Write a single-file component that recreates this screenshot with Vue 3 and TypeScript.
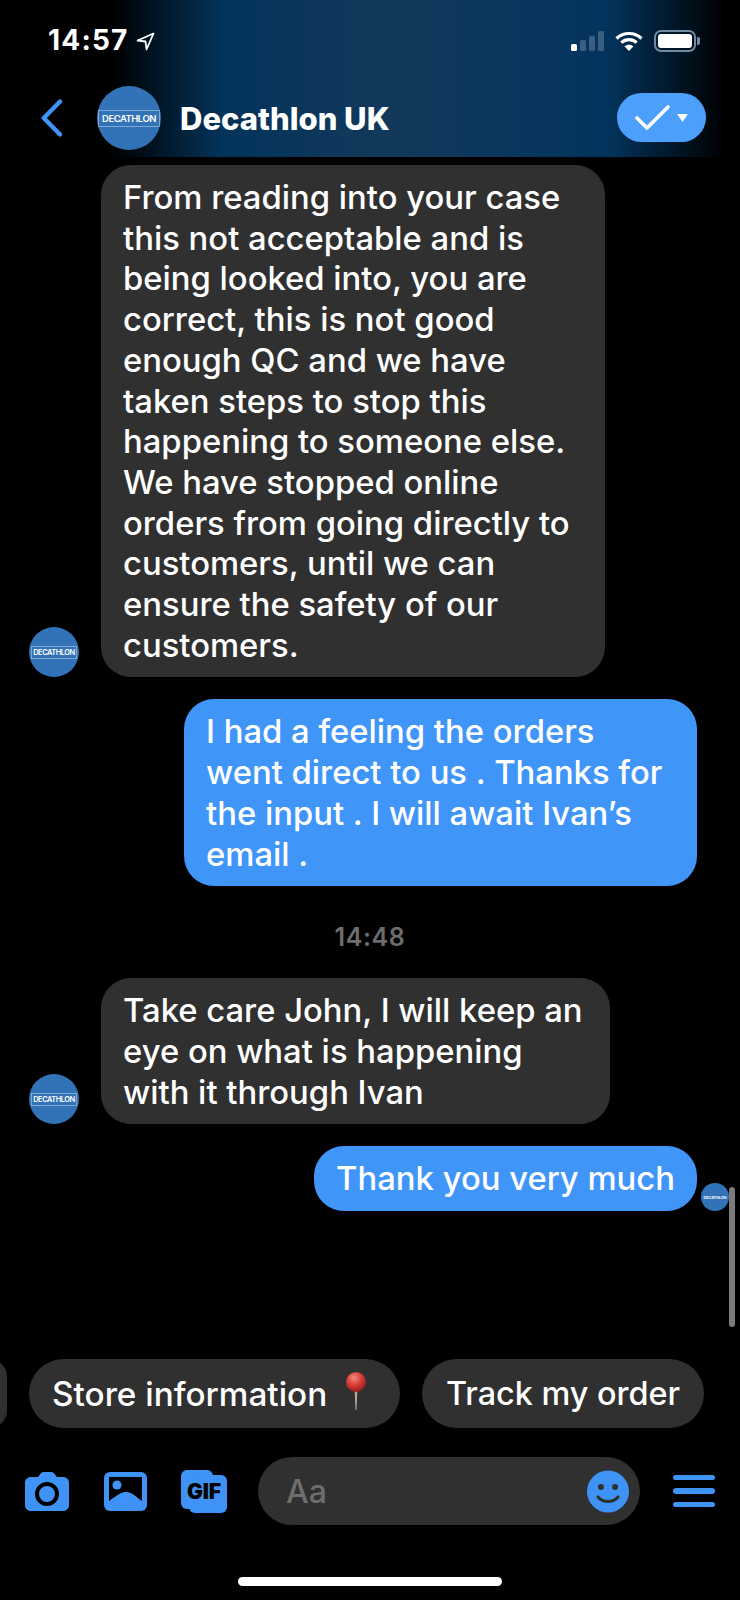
<script setup lang="ts">
interface Message {
  id: number;
  mine: boolean;
  text: string;
  width: number;
}

const first: Message[] = [
  {
    id: 1,
    mine: false,
    width: 504,
    text: 'From reading into your case this not acceptable and is being looked into, you are correct, this is not good enough QC and we have taken steps to stop this happening to someone else. We have stopped online orders from going directly to customers, until we can ensure the safety of our customers.',
  },
  {
    id: 2,
    mine: true,
    width: 513,
    text: 'I had a feeling the orders went direct to us . Thanks for the input . I will await Ivan’s email .',
  },
];

const second: Message[] = [
  {
    id: 3,
    mine: false,
    width: 509,
    text: 'Take care John, I will keep an eye on what is happening with it through Ivan',
  },
];
</script>

<template>
  <div class="phone">
    <header class="top">
      <div class="status">
        <span class="clock">14:57</span>
        <svg class="arrow" width="19" height="19" viewBox="0 0 19 19">
          <path d="M17.5 1.5 1.5 8.5l8 1 1 8z" fill="none" stroke="#fff" stroke-width="1.8" stroke-linejoin="round" />
        </svg>
        <div class="status-right">
          <svg width="33" height="20" viewBox="0 0 33 20">
            <rect x="0" y="13" width="6" height="7" rx="1.5" fill="#fff" />
            <rect x="9" y="9" width="6" height="11" rx="1.5" fill="#3a5f80" />
            <rect x="18" y="5" width="6" height="15" rx="1.5" fill="#3a5f80" />
            <rect x="27" y="0" width="6" height="20" rx="1.5" fill="#3a5f80" />
          </svg>
          <svg class="wifi" width="28" height="20" viewBox="0 0 28 20">
            <path d="M1.5 7.5C8.5 .8 19.5 .8 26.5 7.5" fill="none" stroke="#fff" stroke-width="3.2" />
            <path d="M6.3 11.6c4.400-4 11-4 15.400 0" fill="none" stroke="#fff" stroke-width="3.2" />
            <path d="M14 20l-4.600-4.700c2.600-2.200 6.600-2.200 9.200 0z" fill="#fff" />
          </svg>
          <div class="battery"><i></i></div>
        </div>
      </div>
      <div class="nav">
        <svg class="back" width="22" height="38" viewBox="0 0 22 38">
          <path d="M19 2.500 2.800 19 19 35.500" fill="none" stroke="#3f93f6" stroke-width="4.400" stroke-linecap="round" stroke-linejoin="round" />
        </svg>
        <div class="avatar big"><span>DECATHLON</span></div>
        <h1>Decathlon UK</h1>
        <button class="done" type="button">
          <svg width="36" height="25" viewBox="0 0 36 25">
            <path d="M2 13l10 10L33 2" fill="none" stroke="#fff" stroke-width="3.600" stroke-linecap="round" stroke-linejoin="round" />
          </svg>
          <svg width="11" height="8" viewBox="0 0 12 9"><path d="M0 0h12L6 9z" fill="#fff" /></svg>
        </button>
      </div>
    </header>

    <main class="thread">
      <div v-for="m in first" :key="m.id" class="row" :class="{ mine: m.mine }">
        <div v-if="!m.mine" class="avatar"><span>DECATHLON</span></div>
        <p class="bubble" :style="{ width: m.width + 'px' }">{{ m.text }}</p>
      </div>
      <div class="stamp">14:48</div>
      <div v-for="m in second" :key="m.id" class="row">
        <div class="avatar"><span>DECATHLON</span></div>
        <p class="bubble" :style="{ width: m.width + 'px' }">{{ m.text }}</p>
      </div>
      <div class="row mine last">
        <p class="bubble">Thank you very much</p>
        <div class="avatar seen"><span>DECATHLON</span></div>
      </div>
      <div class="scrollbar"></div>
    </main>

    <div class="replies">
      <div class="pill cut"></div>
      <div class="pill store">
        Store information
        <svg class="pin" width="22" height="38" viewBox="0 0 22 38">
          <defs>
            <radialGradient id="pinHead" cx="0.4" cy="0.3" r="0.75">
              <stop offset="0" stop-color="#f58a80" />
              <stop offset="0.5" stop-color="#d63c35" />
              <stop offset="1" stop-color="#8f1c1a" />
            </radialGradient>
          </defs>
          <path d="M9.500 16h3L11.500 38h-1z" fill="#b5a596" />
          <circle cx="11" cy="10" r="10" fill="url(#pinHead)" />
        </svg>
      </div>
      <div class="pill track">Track my order</div>
    </div>

    <footer class="composer">
      <svg class="tool cam" width="44" height="39" viewBox="0 0 44 39">
        <path d="M6 5h7l2.500-3.200C16.500.6 17.500 0 19 0h7c1.500 0 2.500.6 3.500 1.800L32 5h6c3.500 0 6 2.500 6 6v22c0 3.500-2.500 6-6 6H6c-3.500 0-6-2.500-6-6V11c0-3.500 2.500-6 6-6z" fill="#3f93f6" />
        <circle cx="22" cy="22" r="10" fill="none" stroke="#000" stroke-width="4" />
      </svg>
      <svg class="tool pic" width="43" height="39" viewBox="0 0 43 39">
        <rect width="43" height="39" rx="6" fill="#3f93f6" />
        <rect x="5" y="5" width="33" height="24" fill="#000" />
        <circle cx="13" cy="13" r="4.500" fill="#3f93f6" />
        <path d="M5 29c10-7 12-9 17-9s8 3 16 9v3H5z" fill="#3f93f6" />
      </svg>
      <div class="gif"><span>GIF</span></div>
      <div class="input">
        <span>Aa</span>
        <svg width="42" height="43" viewBox="0 0 42 43">
          <circle cx="21" cy="21.500" r="21" fill="#3f93f6" />
          <circle cx="14" cy="17" r="3" fill="#2f2f2f" />
          <circle cx="28" cy="17" r="3" fill="#2f2f2f" />
          <path d="M11 27c5 6 15 6 20 0" fill="none" stroke="#2f2f2f" stroke-width="3.200" stroke-linecap="round" />
        </svg>
      </div>
      <div class="burger"><i></i><i></i><i></i></div>
    </footer>

    <div class="home"></div>
  </div>
</template>

<style>
html,
body {
  background: #000;
}
</style>

<style scoped>
.phone {
  width: 740px;
  height: 1600px;
  background: #000;
  color: #fff;
  display: flex;
  flex-direction: column;
  overflow: hidden;
  font-family: Inter, "Liberation Sans", sans-serif;
}

.top {
  height: 157px;
  flex: none;
  background: linear-gradient(90deg, #000 0, #000 15%, #03335a 30%, #12395b 52%, #03345d 82%, #000 98%);
}

.status {
  height: 86px;
  display: flex;
  align-items: flex-start;
  padding: 27px 38px 0 48px;
  box-sizing: border-box;
}

.clock {
  font-size: 28px;
  line-height: 26px;
  font-weight: 700;
  letter-spacing: 1.2px;
  width: 88px;
}

.arrow {
  margin-top: 5px;
}

.status-right {
  margin-left: auto;
  display: flex;
  align-items: center;
  padding-top: 3px;
}

.wifi {
  margin: 0 11px;
}

.battery {
  width: 42px;
  height: 22px;
  border: 2px solid #6f8aa3;
  border-radius: 7px;
  padding: 2px;
  box-sizing: border-box;
  position: relative;
  margin-right: 6px;
}

.battery i {
  display: block;
  height: 100%;
  background: #fff;
  border-radius: 3px;
}

.battery::after {
  content: "";
  position: absolute;
  right: -6px;
  top: 5px;
  width: 3px;
  height: 8px;
  background: #6f8aa3;
  border-radius: 0 2px 2px 0;
}

.nav {
  display: flex;
  align-items: center;
  padding: 0 34px 0 41px;
  height: 64px;
}

.back {
  flex: none;
  margin-right: 34px;
}

h1 {
  margin: 0 0 0 19px;
  font-size: 31px;
  font-weight: 800;
  flex: 1;
}

.done {
  width: 89px;
  height: 49px;
  margin-top: -1px;
  border: 0;
  border-radius: 25px;
  background: #4c9ffb;
  display: flex;
  align-items: center;
  justify-content: center;
  gap: 6px;
  padding: 0;
}

.avatar {
  width: 50px;
  height: 50px;
  flex: none;
  border-radius: 50%;
  background: #3273b7;
  display: flex;
  align-items: center;
  justify-content: center;
  overflow: hidden;
}

.avatar span {
  font-size: 7.500px;
  font-weight: 600;
  letter-spacing: -0.5px;
  border: 1px solid #7fa8d2;
  padding: 1px 1px;
  line-height: 9px;
}

.avatar.big {
  width: 64px;
  height: 64px;
}

.avatar.big span {
  font-size: 9.500px;
  padding: 2px 3px;
  line-height: 11px;
}

.avatar.seen {
  width: 28px;
  height: 28px;
  margin-left: 4px;
  margin-right: -32px;
}

.avatar.seen span {
  font-size: 4px;
  letter-spacing: -0.2px;
  border: 0;
  padding: 0;
  line-height: 5px;
}

.thread {
  flex: 1;
  display: flex;
  flex-direction: column;
  padding: 8px 43px 0 29px;
  position: relative;
}

.row {
  display: flex;
  align-items: flex-end;
  gap: 22px;
  margin-bottom: 22px;
}

.row.mine {
  justify-content: flex-end;
  gap: 0;
}

.row.last {
  margin-top: 0;
}

.bubble {
  margin: 0;
  box-sizing: border-box;
  padding: 12px 22px;
  background: #303030;
  border-radius: 30px;
  font-size: 32.800px;
  font-weight: 450;
  line-height: 40.700px;
}

.mine .bubble {
  background: #4095f9;
}

.stamp {
  height: 70px;
  margin-top: -22px;
  padding: 36px 0 0 14px;
  margin-bottom: 22px;
  box-sizing: border-box;
  text-align: center;
  color: #6d6d6d;
  font-size: 25px;
  font-weight: 600;
  letter-spacing: 0.6px;
  line-height: 30px;
}

.scrollbar {
  position: absolute;
  left: 729px;
  top: 1030px;
  width: 6px;
  height: 140px;
  border-radius: 3px;
  background: #7b7b7b;
}

.replies {
  display: flex;
  gap: 22px;
  height: 69px;
  flex: none;
  margin-bottom: 29px;
}

.pill {
  height: 69px;
  box-sizing: border-box;
  border-radius: 35px;
  background: #303030;
  padding: 0 23px;
  font-size: 33.300px;
  font-weight: 450;
  display: flex;
  align-items: center;
  white-space: nowrap;
}

.pill.cut {
  width: 35px;
  margin-left: -28px;
  padding: 0;
}

.pill.store {
  width: 371px;
}

.pill.track {
  width: 282px;
  justify-content: center;
  padding: 0;
  font-size: 32.400px;
}

.pin {
  margin-left: 18px;
  margin-top: -6px;
  flex: none;
}

.composer {
  display: flex;
  align-items: center;
  height: 68px;
  flex: none;
  padding-left: 25px;
}

.tool {
  flex: none;
}

.cam {
  margin-right: 35px;
}

.pic {
  margin-right: 34px;
}

.gif {
  width: 46px;
  height: 43px;
  flex: none;
  position: relative;
  color: #000;
  font-size: 21px;
  font-weight: 900;
  display: flex;
  align-items: center;
  justify-content: center;
  margin-right: 31px;
}

.gif span {
  position: relative;
  z-index: 1;
}

.gif::before,
.gif::after {
  content: "";
  position: absolute;
  background: #3f93f6;
  border-radius: 6px;
}

.gif::before {
  left: 0;
  top: 0;
  width: 32px;
  height: 39px;
}

.gif::after {
  right: 0;
  bottom: 0;
  width: 38px;
  height: 38px;
}

.input {
  width: 382px;
  height: 68px;
  flex: none;
  border-radius: 34px;
  background: #303030;
  box-sizing: border-box;
  padding: 0 11px 0 28px;
  display: flex;
  align-items: center;
  justify-content: space-between;
  color: #6e6e6e;
  font-size: 32px;
  font-weight: 500;
}

.burger {
  margin-left: 33px;
  width: 42px;
  display: flex;
  flex-direction: column;
  gap: 8px;
}

.burger i {
  display: block;
  height: 5.500px;
  border-radius: 3px;
  background: #3f93f6;
}

.home {
  width: 264px;
  height: 9px;
  flex: none;
  margin: 52px auto 14px;
  border-radius: 5px;
  background: #fff;
}
</style>
